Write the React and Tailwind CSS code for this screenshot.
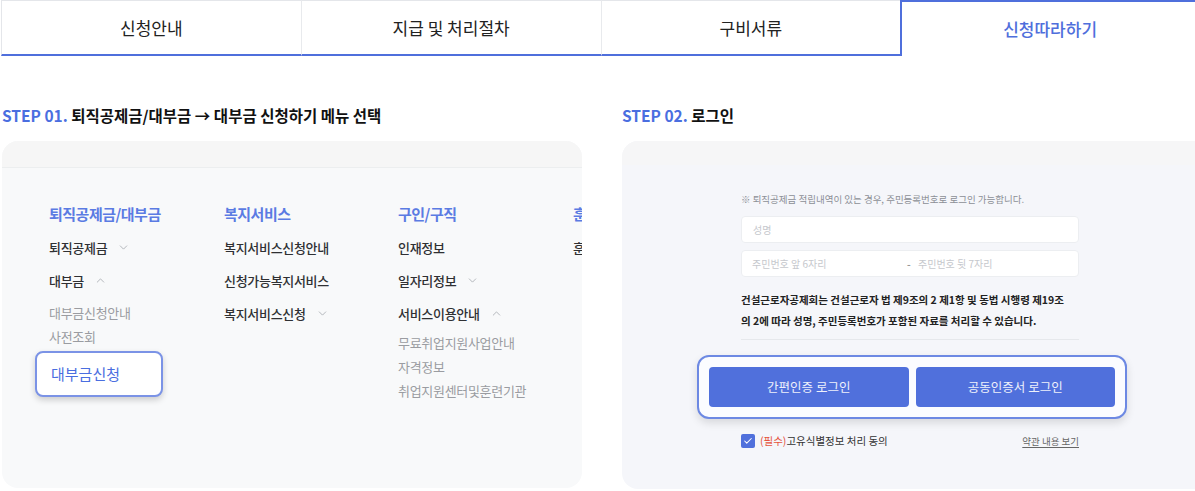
import { ChevronDown, ChevronUp, Check } from "lucide-react";

const font = { fontFamily: '"Noto Sans CJK KR", "Noto Sans", sans-serif' };

function Tabs() {
  const tabs = ["신청안내", "지급 및 처리절차", "구비서류", "신청따라하기"];
  return (
    <div className="flex w-[1200px] pl-[1px]">
      {tabs.map((t, i) =>
        i === 3 ? (
          <div
            key={t}
            className="flex h-[56px] w-[300px] items-center justify-center border-x-2 border-t-2 border-[#4f6fdc] text-[17px] font-medium text-[#4f6fdc]"
          >
            {t}
          </div>
        ) : (
          <div
            key={t}
            className={`flex h-[56px] w-[300px] items-center justify-center border-t border-b-2 border-t-[#e4e6ea] border-b-[#4f6fdc] text-[17px] text-[#222] ${
              i === 0 ? "border-l border-l-[#e4e6ea]" : "border-l border-l-[#e8eaed]"
            }`}
          >
            {t}
          </div>
        )
      )}
    </div>
  );
}

function Item({ children, icon }) {
  return (
    <div className="flex h-[33px] items-center gap-[10px] whitespace-nowrap text-[13px] font-medium tracking-[-0.3px] text-[#2f3033]">
      <span>{children}</span>
      {icon === "down" && <ChevronDown size={13} strokeWidth={1.4} className="text-[#9ea2a9]" />}
      {icon === "up" && <ChevronUp size={13} strokeWidth={1.4} className="text-[#9ea2a9]" />}
    </div>
  );
}

function Sub({ children }) {
  return (
    <div className="flex h-[24px] items-center whitespace-nowrap text-[13px] tracking-[-0.3px] text-[#9a9ca1]">
      {children}
    </div>
  );
}

function Head({ children }) {
  return (
    <div className="flex h-[33px] items-center whitespace-nowrap text-[15px] font-semibold tracking-[-0.5px] text-[#5b7be3]">
      {children}
    </div>
  );
}

function MenuPanel() {
  return (
    <div className="h-[347px] w-[580px] overflow-hidden rounded-[16px] bg-[#f8f9fa]">
      <div className="h-[27px] border-b border-[#eceeef] bg-[#f6f6f6]" />
      <div className="flex pl-[47px] pt-[30px]">
        <div className="w-[175px] shrink-0">
          <Head>퇴직공제금/대부금</Head>
          <Item icon="down">퇴직공제금</Item>
          <Item icon="up">대부금</Item>
          <div className="mt-[4px]">
            <Sub>대부금신청안내</Sub>
            <Sub>사전조회</Sub>
          </div>
          <div className="-ml-[14px] mt-[2px] flex h-[46px] w-[128px] items-center rounded-[8px] border-2 border-[#7b93e6] bg-white pl-[14px] text-[15px] text-[#4a6ee0] shadow-[0_3px_6px_rgba(0,0,0,0.18)]">
            대부금신청
          </div>
        </div>
        <div className="w-[174px] shrink-0">
          <Head>복지서비스</Head>
          <Item>복지서비스신청안내</Item>
          <Item>신청가능복지서비스</Item>
          <Item icon="down">복지서비스신청</Item>
        </div>
        <div className="w-[175px] shrink-0">
          <Head>구인/구직</Head>
          <Item>인재정보</Item>
          <Item icon="down">일자리정보</Item>
          <Item icon="up">서비스이용안내</Item>
          <div className="mt-[1px]">
            <Sub>무료취업지원사업안내</Sub>
            <Sub>자격정보</Sub>
            <Sub>취업지원센터및훈련기관</Sub>
          </div>
        </div>
        <div className="w-[100px] shrink-0">
          <Head>훈련/자격</Head>
          <Item>훈련정보</Item>
        </div>
      </div>
    </div>
  );
}

function LoginPanel() {
  return (
    <div className="h-[348px] w-[600px] overflow-hidden rounded-[16px] bg-[#f5f6fa]">
      <div className="h-[24px] bg-[#f6f6f7]" />
      <div className="ml-[119px] w-[338px] pt-[27px]">
        <p className="whitespace-nowrap text-[9.5px] leading-[14px] text-[#8c8f96]">
          ※ 퇴직공제금 적립내역이 있는 경우, 주민등록번호로 로그인 가능합니다.
        </p>
        <div className="mt-[10px] flex h-[27px] items-center rounded-[4px] border border-[#eceef1] bg-white pl-[11px] text-[10px] text-[#c6c8cd]">
          성명
        </div>
        <div className="mt-[7px] flex h-[27px] items-center rounded-[4px] border border-[#eceef1] bg-white pl-[10px] text-[10px] text-[#c6c8cd]">
          <span className="w-[155px]">주민번호 앞 6자리</span>
          <span className="w-[11px] font-bold text-[#999]">-</span>
          <span>주민번호 뒷 7자리</span>
        </div>
        <p className="mt-[12px] whitespace-nowrap text-[10.5px] font-bold leading-[21px] text-[#222]">
          건설근로자공제회는 건설근로자 법 제9조의 2 제1항 및 동법 시행령 제19조
          <br />의 2에 따라 성명, 주민등록번호가 포함된 자료를 처리할 수 있습니다.
        </p>
        <div className="mt-[8px] h-px bg-[#e6e8ec]" />
        <div className="-ml-[44px] mt-[15px] flex w-[430px] gap-[7px] rounded-[12px] border-2 border-[#6d89e3] bg-[#fbfcff] p-[10px] shadow-[0_4px_8px_rgba(0,0,0,0.12)]">
          <button className="h-[40px] flex-1 rounded-[4px] bg-[#5070dc] text-[12.5px] text-[#eef1fb]">
            간편인증 로그인
          </button>
          <button className="h-[40px] flex-1 rounded-[4px] bg-[#5070dc] text-[12.5px] text-[#eef1fb]">
            공동인증서 로그인
          </button>
        </div>
        <div className="mt-[14px] flex items-center justify-between">
          <div className="flex items-center gap-[5px] text-[10.5px] text-[#333]">
            <span className="flex h-[14px] w-[14px] items-center justify-center rounded-[2px] bg-[#5070dc]">
              <Check size={10} strokeWidth={2.5} className="text-white" />
            </span>
            <span>
              <span className="text-[#e5533d]">(필수)</span>고유식별정보 처리 동의
            </span>
          </div>
          <span className="text-[9.5px] text-[#666] underline underline-offset-2">약관 내용 보기</span>
        </div>
      </div>
    </div>
  );
}

export default function App() {
  return (
    <div className="h-[491px] w-full overflow-hidden bg-white" style={font}>
      <Tabs />
      <div className="flex gap-[40px] pl-[2px] pt-[49px]">
        <div className="w-[580px] shrink-0">
          <h2 className="mb-[16px] whitespace-nowrap text-[15.5px] font-semibold leading-[20px] text-[#111]">
            <span className="text-[#4a6ee0]">STEP 01.</span> 퇴직공제금/대부금 → 대부금 신청하기 메뉴 선택
          </h2>
          <MenuPanel />
        </div>
        <div className="w-[600px] shrink-0">
          <h2 className="mb-[16px] text-[15.5px] font-semibold leading-[20px] text-[#111]">
            <span className="text-[#4a6ee0]">STEP 02.</span> 로그인
          </h2>
          <LoginPanel />
        </div>
      </div>
    </div>
  );
}
